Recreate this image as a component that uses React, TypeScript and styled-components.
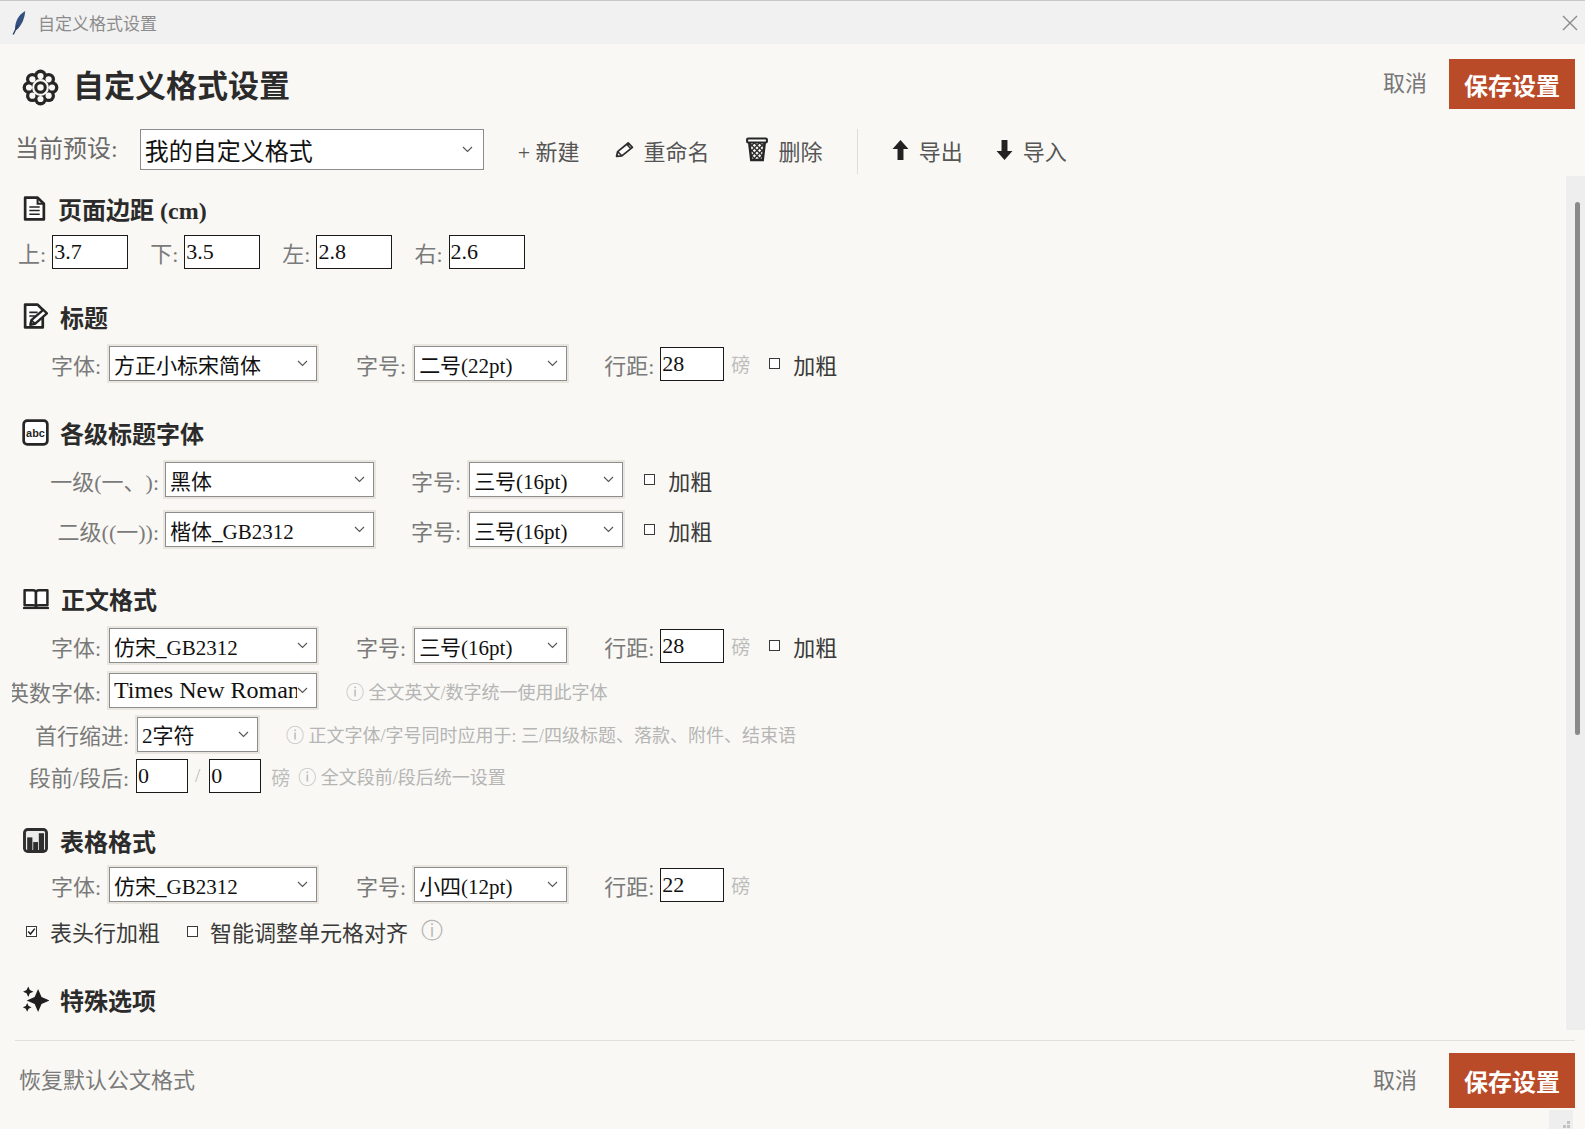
import React from 'react';
import styled, { createGlobalStyle } from 'styled-components';

const SERIF = `"Liberation Serif", "Noto Sans CJK SC", serif`;
const SANS = `"Noto Sans CJK SC", "Liberation Sans", sans-serif`;

const GlobalStyle = createGlobalStyle`
  html, body {
    margin: 0;
    padding: 0;
  }
  body {
    background: #f9f8f4;
    font-family: ${SERIF};
    overflow: hidden;
    text-spacing-trim: space-all;
  }
  * {
    box-sizing: border-box;
  }
`;

const Window = styled.div`
  position: relative;
  width: 1585px;
  height: 1129px;
  display: flex;
  flex-direction: column;
  background: #f9f8f4;
  overflow: hidden;
`;

const TitleBar = styled.div`
  flex: none;
  height: 44px;
  display: flex;
  align-items: center;
  gap: 12px;
  padding: 0 7px 0 12px;
  background: #f1f1f1;
  border-top: 1px solid #c8c8c8;
`;

const TitleBarText = styled.span`
  flex: 1;
  font-family: ${SANS};
  font-size: 17px;
  color: #8c8c8c;
`;

const Header = styled.div`
  flex: none;
  height: 85px;
  display: flex;
  align-items: flex-start;
  padding: 15px 10px 0 22px;
`;

const TitleGroup = styled.div`
  flex: 1;
  display: flex;
  align-items: center;
  gap: 14px;
  height: 40px;
  margin-top: 8px;
`;

const PageTitle = styled.h1`
  margin: 0;
  font-size: 31px;
  font-weight: 700;
  color: #2b2b2b;
  line-height: 40px;
`;

const LinkButton = styled.span<{ $mr: number }>`
  font-size: 22px;
  color: #777;
  line-height: 50px;
  margin-right: ${p => p.$mr}px;
`;

const SaveButton = styled.button<{ $h: number }>`
  width: 126px;
  height: ${p => p.$h}px;
  border: none;
  background: #b94b29;
  color: #fff;
  font-family: ${SERIF};
  font-size: 24px;
  font-weight: 700;
  padding: 0;
  cursor: pointer;
`;

const Toolbar = styled.div`
  flex: none;
  height: 45px;
  display: flex;
  align-items: flex-start;
  padding-left: 15px;
`;

const ToolLabel = styled.span`
  font-size: 24px;
  color: #6a6a6a;
  line-height: 41px;
  margin-right: 22px;
`;

const PresetSelect = styled.div`
  width: 344px;
  height: 41px;
  display: flex;
  align-items: center;
  padding: 0 10px 0 4px;
  border: 1px solid #8c8c8c;
  background: #fff;
  font-size: 24px;
  color: #111;
`;

const ToolButton = styled.span<{ $ml: number }>`
  display: flex;
  align-items: center;
  gap: 10px;
  height: 41px;
  margin-left: ${p => p.$ml}px;
  font-size: 22px;
  color: #555;
  white-space: nowrap;
`;

const ToolSeparator = styled.div`
  width: 1px;
  height: 45px;
  margin-left: 34px;
  background: #e0ded9;
`;

const Main = styled.div`
  flex: none;
  height: 854px;
  margin-top: 2px;
  display: flex;
`;

const Content = styled.div`
  flex: 1;
  margin-left: 12px;
  overflow: hidden;
`;

const ScrollTrack = styled.div`
  flex: none;
  width: 20px;
  background: #eeeeee;
  border-left: 1px solid #fbfbfb;
  padding: 26px 0 0 9px;
`;

const ScrollThumb = styled.div`
  width: 5px;
  height: 533px;
  border-radius: 3px;
  background: #8a8a8a;
`;

const Section = styled.section<{ $mt: number }>`
  margin-top: ${p => p.$mt}px;
`;

const Heading = styled.h3`
  margin: 0;
  height: 32px;
  display: flex;
  align-items: center;
  gap: 11px;
  padding-left: 10px;
  font-size: 24px;
  font-weight: 700;
  color: #2b2b2b;
  white-space: nowrap;
`;

const Row = styled.div<{ $mt: number; $h?: number; $pl?: number }>`
  display: flex;
  align-items: center;
  height: ${p => p.$h ?? 35}px;
  margin-top: ${p => p.$mt}px;
  padding-left: ${p => p.$pl ?? 0}px;
  white-space: nowrap;
`;

const Field = styled.div<{ $ml: number }>`
  display: flex;
  align-items: center;
  margin-left: ${p => p.$ml}px;
`;

const Label = styled.span<{ $w?: number; $gap?: number }>`
  flex: none;
  display: flex;
  justify-content: flex-end;
  width: ${p => (p.$w ? `${p.$w}px` : 'auto')};
  margin-right: ${p => p.$gap ?? 8}px;
  font-size: 22px;
  color: #7a7a7a;
  white-space: nowrap;
`;

const Combo = styled.div<{ $w: number }>`
  flex: none;
  width: ${p => p.$w}px;
  height: 35px;
  display: flex;
  align-items: center;
  padding: 0 8px 0 4px;
  border: 1px solid #8d8d8d;
  background: #fff;
  box-shadow: 0 0 0 2px #e9e6e0;
  font-size: 21px;
  color: #111;
`;

const ComboText = styled.span<{ $size?: number }>`
  flex: 1;
  overflow: hidden;
  white-space: nowrap;
  font-size: ${p => (p.$size ? `${p.$size}px` : 'inherit')};
`;

const Entry = styled.div<{ $w: number; $ml?: number }>`
  flex: none;
  width: ${p => p.$w}px;
  height: 34px;
  margin-left: ${p => p.$ml ?? 0}px;
  display: flex;
  align-items: center;
  padding-left: 1px;
  border: 1px solid #1a1a1a;
  background: #fff;
  font-size: 22px;
  color: #111;
`;

const Unit = styled.span<{ $ml: number }>`
  margin-left: ${p => p.$ml}px;
  font-size: 19px;
  color: #bdbdbd;
`;

const Hint = styled.span<{ $ml: number }>`
  margin-left: ${p => p.$ml}px;
  font-size: 18px;
  color: #b5b5b5;
`;

const CheckBox = styled.span<{ $ml: number }>`
  flex: none;
  width: 11px;
  height: 11px;
  margin-left: ${p => p.$ml}px;
  border: 1px solid #3a3a3a;
  border-left-width: 1.5px;
  border-top-width: 1.5px;
  background: #fff;
  display: flex;
  align-items: center;
  justify-content: center;
`;

const CheckText = styled.span<{ $ml: number }>`
  margin-left: ${p => p.$ml}px;
  font-size: 22px;
  color: #3a3a3a;
`;

const InfoMark = styled.span<{ $ml: number }>`
  margin-left: ${p => p.$ml}px;
  font-family: "DejaVu Sans", sans-serif;
  font-size: 22px;
  color: #b5b5b5;
`;

const Divider = styled.div`
  flex: none;
  height: 1px;
  margin: 10px 10px 0 15px;
  background: #e2e0db;
`;

const Footer = styled.div`
  flex: 1;
  display: flex;
  align-items: flex-start;
  padding: 12px 10px 0 19px;
`;

const ResetLink = styled.span`
  flex: 1;
  font-size: 22px;
  color: #7a7a7a;
  line-height: 55px;
`;

const FooterCancel = styled(LinkButton)`
  line-height: 55px;
`;

const Grip = styled.div`
  position: absolute;
  right: 12px;
  bottom: 0;
  width: 24px;
  height: 19px;
  background: #eeeeee;
`;

/* ---------- icons ---------- */

const Feather = () => (
  <svg width="14" height="25" viewBox="0 0 14 25">
    <path d="M3 19.5 C3 12 6 5 13.2 1 C12.8 8.5 9.5 15.5 4.5 20 Z" fill="#34507f" />
    <path d="M1.2 24.5 L5.8 15" stroke="#2a3e60" strokeWidth="1.4" />
  </svg>
);

const CloseIcon = () => (
  <svg width="16" height="16" viewBox="0 0 16 16">
    <path d="M1 1 L15 15 M15 1 L1 15" stroke="#8a8a8a" strokeWidth="1.4" />
  </svg>
);

const FlowerIcon = () => {
  const petals = Array.from({ length: 8 }, (_, i) => {
    const a = (i * Math.PI) / 4;
    return { x: 18 + Math.cos(a) * 11.2, y: 18 + Math.sin(a) * 11.2 };
  });
  return (
    <svg width="37" height="37" viewBox="0 0 36 36">
      {petals.map((p, i) => (
        <circle key={`o${i}`} cx={p.x} cy={p.y} r="6.2" fill="#262626" />
      ))}
      <circle cx="18" cy="18" r="11.5" fill="#262626" />
      {petals.map((p, i) => (
        <circle key={`i${i}`} cx={p.x} cy={p.y} r="3" fill="#f9f8f4" />
      ))}
      <circle cx="18" cy="18" r="8.2" fill="#f9f8f4" />
      <circle cx="18" cy="18" r="4.6" fill="none" stroke="#262626" strokeWidth="3" />
    </svg>
  );
};

const PageIcon = () => (
  <svg width="25" height="27" viewBox="0 0 24 26">
    <path d="M3 2.5 H15 L21 8.5 V23.5 H3 Z" fill="#fff" stroke="#262626" strokeWidth="2.6" strokeLinejoin="round" />
    <path d="M15 2.5 V8.5 H21" fill="none" stroke="#262626" strokeWidth="2" />
    <path d="M7 11.5 H17 M7 15 H17 M7 18.5 H17" stroke="#262626" strokeWidth="1.4" />
  </svg>
);

const MemoIcon = () => (
  <svg width="27" height="28" viewBox="0 0 26 27">
    <path d="M3 2.5 H15 L20 7.5 V24.5 H3 Z" fill="#fff" stroke="#262626" strokeWidth="2.6" strokeLinejoin="round" />
    <path d="M7 10 H15 M7 13.5 H13" stroke="#262626" strokeWidth="1.5" />
    <path d="M8 22 L9 17.5 L20.5 7.5 L24 11 L12.5 21 Z" fill="#fff" stroke="#262626" strokeWidth="2.3" strokeLinejoin="round" />
    <path d="M9 17.5 L12.5 21" stroke="#262626" strokeWidth="1.8" />
  </svg>
);

const AbcIcon = () => (
  <svg width="27" height="27" viewBox="0 0 26 26">
    <rect x="1.6" y="1.6" width="22.8" height="22.8" rx="3.5" fill="#fff" stroke="#262626" strokeWidth="2.6" />
    <text x="13" y="17" textAnchor="middle" fontFamily="Liberation Sans, sans-serif" fontWeight="700" fontSize="10.5" fill="#262626">abc</text>
  </svg>
);

const BookIcon = () => (
  <svg width="28" height="23" viewBox="0 0 27 22">
    <path d="M2.5 3 H10.5 Q13.5 3 13.5 5.5 V19 Q13.5 17.5 10.5 17.5 H2.5 Z" fill="#fff" stroke="#262626" strokeWidth="2.4" strokeLinejoin="round" />
    <path d="M24.5 3 H16.5 Q13.5 3 13.5 5.5 V19 Q13.5 17.5 16.5 17.5 H24.5 Z" fill="#fff" stroke="#262626" strokeWidth="2.4" strokeLinejoin="round" />
    <path d="M1 20.2 H26" stroke="#262626" strokeWidth="2" />
  </svg>
);

const ChartIcon = () => (
  <svg width="27" height="27" viewBox="0 0 26 26">
    <rect x="1" y="1" width="24" height="24" rx="4.5" fill="#2e2e2e" />
    <rect x="3.8" y="3.8" width="18.4" height="18.4" rx="1.5" fill="#ececec" />
    <rect x="5" y="10" width="5" height="12.2" fill="#2e2e2e" />
    <rect x="10.8" y="14.5" width="4.6" height="7.7" fill="#2e2e2e" />
    <rect x="16.2" y="6" width="5" height="16.2" fill="#2e2e2e" />
  </svg>
);

const star = (cx: number, cy: number, r: number, k = 0.25) => {
  const d = r * k;
  return `M${cx} ${cy - r} L${cx + d} ${cy - d} L${cx + r} ${cy} L${cx + d} ${cy + d} L${cx} ${cy + r} L${cx - d} ${cy + d} L${cx - r} ${cy} L${cx - d} ${cy - d} Z`;
};

const SparkleIcon = () => (
  <svg width="27" height="27" viewBox="0 0 26 26">
    <path d={star(15.5, 14, 11, 0.3)} fill="#1f1f1f" />
    <path d={star(6, 5.5, 5, 0.32)} fill="#1f1f1f" />
    <path d={star(5, 20.5, 4.2, 0.32)} fill="#1f1f1f" />
  </svg>
);

const PencilIcon = () => (
  <svg width="19" height="17" viewBox="0 0 18 16">
    <path d="M1.5 14.5 L2.5 10 L12.5 1.8 L16.5 6 L6.5 14 Z" fill="#fff" stroke="#2e2e2e" strokeWidth="1.7" strokeLinejoin="round" />
    <path d="M2.5 10 L6.5 14 M11 3 L15 7.2" stroke="#2e2e2e" strokeWidth="1.4" />
  </svg>
);

const TrashIcon = () => (
  <svg width="24" height="25" viewBox="0 0 22 24">
    <defs>
      <clipPath id="binBody">
        <path d="M3.5 5 L5.5 22 H16.5 L18.5 5 Z" />
      </clipPath>
    </defs>
    <g clipPath="url(#binBody)" stroke="#2e2e2e" strokeWidth="1.3">
      {[-12, -7, -2, 3, 8, 13, 18].map(o => (
        <path key={`a${o}`} d={`M${o} 5 L${o + 17} 22`} />
      ))}
      {[4, 9, 14, 19, 24, 29, 34].map(o => (
        <path key={`b${o}`} d={`M${o} 5 L${o - 17} 22`} />
      ))}
    </g>
    <path d="M3.5 5 L5.5 22 H16.5 L18.5 5" fill="none" stroke="#262626" strokeWidth="2.4" />
    <rect x="1.5" y="1.5" width="19" height="3.8" rx="1" fill="#fff" stroke="#262626" strokeWidth="2" />
  </svg>
);

const ArrowIcon = ({ down }: { down?: boolean }) => (
  <svg width="17" height="22" viewBox="0 0 16 20" style={down ? { transform: 'rotate(180deg)' } : undefined}>
    <path d="M8 0.5 L15.5 9 H10.8 V19.5 H5.2 V9 H0.5 Z" fill="#222" />
  </svg>
);

const Chevron = () => (
  <svg width="11" height="7" viewBox="0 0 11 7">
    <path d="M1 1 L5.5 5.5 L10 1" fill="none" stroke="#555" strokeWidth="1.1" />
  </svg>
);

const Tick = () => (
  <svg width="9" height="9" viewBox="0 0 9 9">
    <path d="M1.2 4.6 L3.5 7 L7.8 1.6" fill="none" stroke="#222" strokeWidth="1.5" />
  </svg>
);

/* ---------- small composed parts ---------- */

const Select = ({ w, value, size }: { w: number; value: string; size?: number }) => (
  <Combo $w={w}>
    <ComboText $size={size}>{value}</ComboText>
    <Chevron />
  </Combo>
);

const Bold = ({ ml }: { ml: number }) => (
  <>
    <CheckBox $ml={ml} />
    <CheckText $ml={13}>加粗</CheckText>
  </>
);

const App = () => {
  return (
    <>
      <GlobalStyle />
      <Window>
        <TitleBar>
          <Feather />
          <TitleBarText>自定义格式设置</TitleBarText>
          <CloseIcon />
        </TitleBar>

        <Header>
          <TitleGroup>
            <FlowerIcon />
            <PageTitle>自定义格式设置</PageTitle>
          </TitleGroup>
          <LinkButton $mr={22}>取消</LinkButton>
          <SaveButton $h={50}>保存设置</SaveButton>
        </Header>

        <Toolbar>
          <ToolLabel>当前预设:</ToolLabel>
          <PresetSelect>
            <ComboText>我的自定义格式</ComboText>
            <Chevron />
          </PresetSelect>
          <ToolButton $ml={34}>+ 新建</ToolButton>
          <ToolButton $ml={35}>
            <PencilIcon />
            重命名
          </ToolButton>
          <ToolButton $ml={35}>
            <TrashIcon />
            删除
          </ToolButton>
          <ToolSeparator />
          <ToolButton $ml={34}>
            <ArrowIcon />
            导出
          </ToolButton>
          <ToolButton $ml={33}>
            <ArrowIcon down />
            导入
          </ToolButton>
        </Toolbar>

        <Main>
          <Content>
            <Section $mt={16}>
              <Heading>
                <PageIcon />
                页面边距 (cm)
              </Heading>
              <Row $mt={11} $h={34} $pl={6}>
                <Label $gap={6}>上:</Label>
                <Entry $w={76}>3.7</Entry>
                <Field $ml={22}>
                  <Label $gap={6}>下:</Label>
                  <Entry $w={76}>3.5</Entry>
                </Field>
                <Field $ml={22}>
                  <Label $gap={6}>左:</Label>
                  <Entry $w={76}>2.8</Entry>
                </Field>
                <Field $ml={22}>
                  <Label $gap={6}>右:</Label>
                  <Entry $w={76}>2.6</Entry>
                </Field>
              </Row>
            </Section>

            <Section $mt={31}>
              <Heading>
                <MemoIcon />
                标题
              </Heading>
              <Row $mt={14}>
                <Label $w={89}>字体:</Label>
                <Select w={208} value="方正小标宋简体" />
                <Field $ml={39}>
                  <Label>字号:</Label>
                  <Select w={153} value="二号(22pt)" />
                </Field>
                <Field $ml={37}>
                  <Label $gap={6}>行距:</Label>
                  <Entry $w={64}>28</Entry>
                </Field>
                <Unit $ml={7}>磅</Unit>
                <Bold ml={19} />
              </Row>
            </Section>

            <Section $mt={35}>
              <Heading>
                <AbcIcon />
                各级标题字体
              </Heading>
              <Row $mt={14}>
                <Label $w={147} $gap={6}>一级(一、):</Label>
                <Select w={209} value="黑体" />
                <Field $ml={37}>
                  <Label>字号:</Label>
                  <Select w={154} value="三号(16pt)" />
                </Field>
                <Bold ml={21} />
              </Row>
              <Row $mt={15}>
                <Label $w={147} $gap={6}>二级((一)):</Label>
                <Select w={209} value="楷体_GB2312" />
                <Field $ml={37}>
                  <Label>字号:</Label>
                  <Select w={154} value="三号(16pt)" />
                </Field>
                <Bold ml={21} />
              </Row>
            </Section>

            <Section $mt={35}>
              <Heading>
                <BookIcon />
                正文格式
              </Heading>
              <Row $mt={14}>
                <Label $w={89}>字体:</Label>
                <Select w={208} value="仿宋_GB2312" />
                <Field $ml={39}>
                  <Label>字号:</Label>
                  <Select w={153} value="三号(16pt)" />
                </Field>
                <Field $ml={37}>
                  <Label $gap={6}>行距:</Label>
                  <Entry $w={64}>28</Entry>
                </Field>
                <Unit $ml={7}>磅</Unit>
                <Bold ml={19} />
              </Row>
              <Row $mt={10}>
                <Label $w={89}>英数字体:</Label>
                <Select w={208} value="Times New Roman" size={24} />
                <Hint $ml={29}>ⓘ 全文英文/数字统一使用此字体</Hint>
              </Row>
              <Row $mt={9} $h={34}>
                <Label $w={117}>首行缩进:</Label>
                <Select w={121} value="2字符" />
                <Hint $ml={28}>ⓘ 正文字体/字号同时应用于: 三/四级标题、落款、附件、结束语</Hint>
              </Row>
              <Row $mt={8} $h={34}>
                <Label $w={117} $gap={7}>段前/段后:</Label>
                <Entry $w={52}>0</Entry>
                <Unit $ml={7}>/</Unit>
                <Entry $w={52} $ml={9}>0</Entry>
                <Unit $ml={10}>磅</Unit>
                <Hint $ml={8}>ⓘ 全文段前/段后统一设置</Hint>
              </Row>
            </Section>

            <Section $mt={31}>
              <Heading>
                <ChartIcon />
                表格格式
              </Heading>
              <Row $mt={11}>
                <Label $w={89}>字体:</Label>
                <Select w={208} value="仿宋_GB2312" />
                <Field $ml={39}>
                  <Label>字号:</Label>
                  <Select w={153} value="小四(12pt)" />
                </Field>
                <Field $ml={37}>
                  <Label $gap={6}>行距:</Label>
                  <Entry $w={64}>22</Entry>
                </Field>
                <Unit $ml={7}>磅</Unit>
              </Row>
              <Row $mt={14} $h={30}>
                <CheckBox $ml={14}>
                  <Tick />
                </CheckBox>
                <CheckText $ml={13}>表头行加粗</CheckText>
                <CheckBox $ml={27} />
                <CheckText $ml={12}>智能调整单元格对齐</CheckText>
                <InfoMark $ml={13}>ⓘ</InfoMark>
              </Row>
            </Section>

            <Section $mt={37}>
              <Heading>
                <SparkleIcon />
                特殊选项
              </Heading>
            </Section>
          </Content>
          <ScrollTrack>
            <ScrollThumb />
          </ScrollTrack>
        </Main>

        <Divider />

        <Footer>
          <ResetLink>恢复默认公文格式</ResetLink>
          <FooterCancel $mr={32}>取消</FooterCancel>
          <SaveButton $h={55}>保存设置</SaveButton>
        </Footer>

        <Grip>
          <svg width="24" height="19" viewBox="0 0 24 19">
            <rect x="18" y="11" width="3" height="3" fill="#c2c2c2" />
            <rect x="14" y="15" width="3" height="3" fill="#c2c2c2" />
            <rect x="18" y="15" width="3" height="3" fill="#c2c2c2" />
          </svg>
        </Grip>
      </Window>
    </>
  );
};

export default App;
